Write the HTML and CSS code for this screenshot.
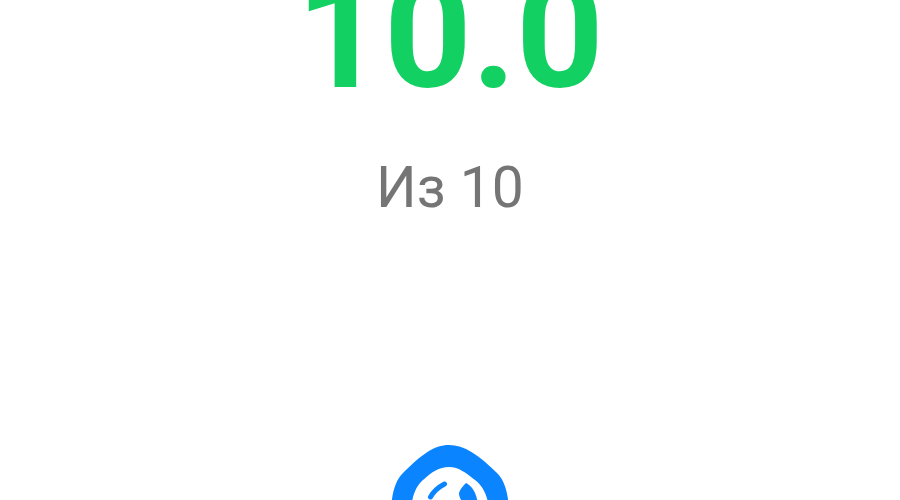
FILE: index.html
```html
<!DOCTYPE html>
<html lang="ru">
<head>
  <meta charset="UTF-8">
  <title>Оценка</title>
  <link rel="stylesheet" href="styles.css">
</head>
<body>

  <div class="score-page">
    <div class="score">10.0</div>
    <div class="score-max">Из 10</div>

    <svg class="face" width="140" height="140" viewBox="380 440 140 140">
      <path class="face-ring" fill-rule="evenodd" d="M449 445 C434 445 421 455 403 473 C396 480 392 491 391 510 C391 550 420 572 450 572 C480 572 509 550 509 510 C508 491 504 480 497 473 C479 455 464 445 449 445 Z M449 467 C439 467 432 472 423 480 C416 486 412 496 411 510 C411 535 430 552 450 552 C470 552 489 535 489 510 C488 496 483 486 475 480 C466 473 459 467 449 467 Z"/>
      <path class="face-eye" d="M430.5 497 Q435 489 444.5 484"/>
      <path class="face-blob" d="M466 483 C472 486 477 493 478 506 L466 506 C461 501 459 497 459 493 C460 489 463 486 466 483 Z"/>
    </svg>
  </div>

</body>
</html>
```

FILE: styles.css
```css
* { box-sizing: border-box; }
html, body { height: 100%; }
body { margin: 0; background: #fff; overflow: hidden; font-family: Roboto, sans-serif; }
.score-page { height: 500px; display: flex; flex-direction: column; align-items: center; overflow: hidden; }
.score { margin-top: -59px; font-size: 153px; line-height: 188px; font-weight: 700; color: #12d162; }
.score-max { margin-top: 26px; font-size: 57px; line-height: 66px; color: #757575; }
.face { flex: none; margin-top: 219px; }
.face-ring { fill: #0a84ff; }
.face-eye { fill: none; stroke: #0a84ff; stroke-width: 5; stroke-linecap: round; }
.face-blob { fill: #0a84ff; }
```
